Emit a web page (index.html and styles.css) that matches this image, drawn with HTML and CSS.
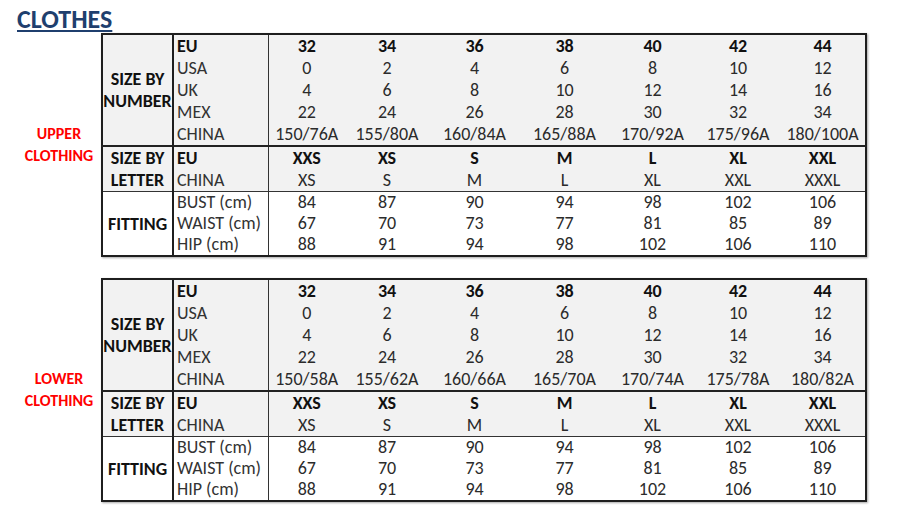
FILE: index.html
```html
<!DOCTYPE html>
<html>
<head>
<meta charset="utf-8">
<link rel="stylesheet" href="styles.css">
</head>
<body>
<h1 class="title">CLOTHES</h1>

<section class="block">
  <div class="side">UPPER<br>CLOTHING</div>
  <table class="chart">
    <colgroup>
      <col class="c-group"><col class="c-label">
      <col style="width:77px"><col style="width:84px"><col style="width:91px"><col style="width:89px"><col style="width:87px"><col style="width:84px"><col style="width:86px">
    </colgroup>
    <tbody class="shaded sec-num">
      <tr><th rowspan="5" class="grp">SIZE BY<br>NUMBER</th><th class="lab b">EU</th><td class="b">32</td><td class="b">34</td><td class="b">36</td><td class="b">38</td><td class="b">40</td><td class="b">42</td><td class="b">44</td></tr>
      <tr><th class="lab">USA</th><td>0</td><td>2</td><td>4</td><td>6</td><td>8</td><td>10</td><td>12</td></tr>
      <tr><th class="lab">UK</th><td>4</td><td>6</td><td>8</td><td>10</td><td>12</td><td>14</td><td>16</td></tr>
      <tr><th class="lab">MEX</th><td>22</td><td>24</td><td>26</td><td>28</td><td>30</td><td>32</td><td>34</td></tr>
      <tr><th class="lab">CHINA</th><td>150/76A</td><td>155/80A</td><td>160/84A</td><td>165/88A</td><td>170/92A</td><td>175/96A</td><td>180/100A</td></tr>
    </tbody>
    <tbody class="shaded sec-let">
      <tr><th rowspan="2" class="grp">SIZE BY<br>LETTER</th><th class="lab b">EU</th><td class="b">XXS</td><td class="b">XS</td><td class="b">S</td><td class="b">M</td><td class="b">L</td><td class="b">XL</td><td class="b">XXL</td></tr>
      <tr><th class="lab">CHINA</th><td>XS</td><td>S</td><td>M</td><td>L</td><td>XL</td><td>XXL</td><td>XXXL</td></tr>
    </tbody>
    <tbody class="sec-fit">
      <tr><th rowspan="3" class="grp">FITTING</th><th class="lab">BUST (cm)</th><td>84</td><td>87</td><td>90</td><td>94</td><td>98</td><td>102</td><td>106</td></tr>
      <tr><th class="lab">WAIST (cm)</th><td>67</td><td>70</td><td>73</td><td>77</td><td>81</td><td>85</td><td>89</td></tr>
      <tr><th class="lab">HIP (cm)</th><td>88</td><td>91</td><td>94</td><td>98</td><td>102</td><td>106</td><td>110</td></tr>
    </tbody>
  </table>
</section>

<section class="block">
  <div class="side">LOWER<br>CLOTHING</div>
  <table class="chart">
    <colgroup>
      <col class="c-group"><col class="c-label">
      <col style="width:77px"><col style="width:84px"><col style="width:91px"><col style="width:89px"><col style="width:87px"><col style="width:84px"><col style="width:86px">
    </colgroup>
    <tbody class="shaded sec-num">
      <tr><th rowspan="5" class="grp">SIZE BY<br>NUMBER</th><th class="lab b">EU</th><td class="b">32</td><td class="b">34</td><td class="b">36</td><td class="b">38</td><td class="b">40</td><td class="b">42</td><td class="b">44</td></tr>
      <tr><th class="lab">USA</th><td>0</td><td>2</td><td>4</td><td>6</td><td>8</td><td>10</td><td>12</td></tr>
      <tr><th class="lab">UK</th><td>4</td><td>6</td><td>8</td><td>10</td><td>12</td><td>14</td><td>16</td></tr>
      <tr><th class="lab">MEX</th><td>22</td><td>24</td><td>26</td><td>28</td><td>30</td><td>32</td><td>34</td></tr>
      <tr><th class="lab">CHINA</th><td>150/58A</td><td>155/62A</td><td>160/66A</td><td>165/70A</td><td>170/74A</td><td>175/78A</td><td>180/82A</td></tr>
    </tbody>
    <tbody class="shaded sec-let">
      <tr><th rowspan="2" class="grp">SIZE BY<br>LETTER</th><th class="lab b">EU</th><td class="b">XXS</td><td class="b">XS</td><td class="b">S</td><td class="b">M</td><td class="b">L</td><td class="b">XL</td><td class="b">XXL</td></tr>
      <tr><th class="lab">CHINA</th><td>XS</td><td>S</td><td>M</td><td>L</td><td>XL</td><td>XXL</td><td>XXXL</td></tr>
    </tbody>
    <tbody class="sec-fit">
      <tr><th rowspan="3" class="grp">FITTING</th><th class="lab">BUST (cm)</th><td>84</td><td>87</td><td>90</td><td>94</td><td>98</td><td>102</td><td>106</td></tr>
      <tr><th class="lab">WAIST (cm)</th><td>67</td><td>70</td><td>73</td><td>77</td><td>81</td><td>85</td><td>89</td></tr>
      <tr><th class="lab">HIP (cm)</th><td>88</td><td>91</td><td>94</td><td>98</td><td>102</td><td>106</td><td>110</td></tr>
    </tbody>
  </table>
</section>
</body>
</html>
```

FILE: styles.css
```css
html, body {
  margin: 0;
  padding: 0;
  background: #ffffff;
}
body {
  font-family: Carlito, "Open Sans", "Liberation Sans", sans-serif;
  color: #2b2b2b;
  padding: 0 0 0 17px;
}
.title {
  margin: 0;
  padding-top: 6px;
  height: 27px;
  font-size: 26px;
  line-height: 26px;
  font-weight: bold;
  color: #1f3f6e;
  text-decoration: underline;
  text-decoration-thickness: 2px;
  text-underline-offset: 2px;
}
.block {
  display: flex;
  align-items: center;
  margin-bottom: 21px;
}
.side {
  width: 84px;
  text-align: center;
  color: #ff0000;
  font-weight: bold;
  font-size: 16px;
  line-height: 22px;
}
.chart {
  border-collapse: collapse;
  table-layout: fixed;
  width: 764px;
  border: 2px solid #1e1e1e;
  box-shadow: 1px 1px 2px rgba(0, 0, 0, 0.35);
  font-size: 18px;
}
.c-group { width: 71px; }
.c-label { width: 95px; }
.chart td, .chart th {
  height: 21px;
  padding: 0;
  line-height: 21px;
  white-space: nowrap;
  font-weight: normal;
}
.sec-num td, .sec-num th {
  height: 22px;
}
.chart td {
  text-align: center;
  color: #2b2b2b;
}
.chart .lab {
  text-align: left;
  padding-left: 3px;
  color: #333333;
  border-left: 2px solid #1e1e1e;
  border-right: 1px solid #333333;
}
.chart .grp {
  text-align: center;
  font-weight: bold;
  color: #111111;
  vertical-align: middle;
  line-height: 22px;
}
.chart .b {
  font-weight: bold;
  color: #111111;
}
.shaded {
  background: #f2f2f2;
}
.sec-let {
  border-top: 2px solid #222222;
}
.sec-fit {
  border-top: 1px solid #333333;
}
```
